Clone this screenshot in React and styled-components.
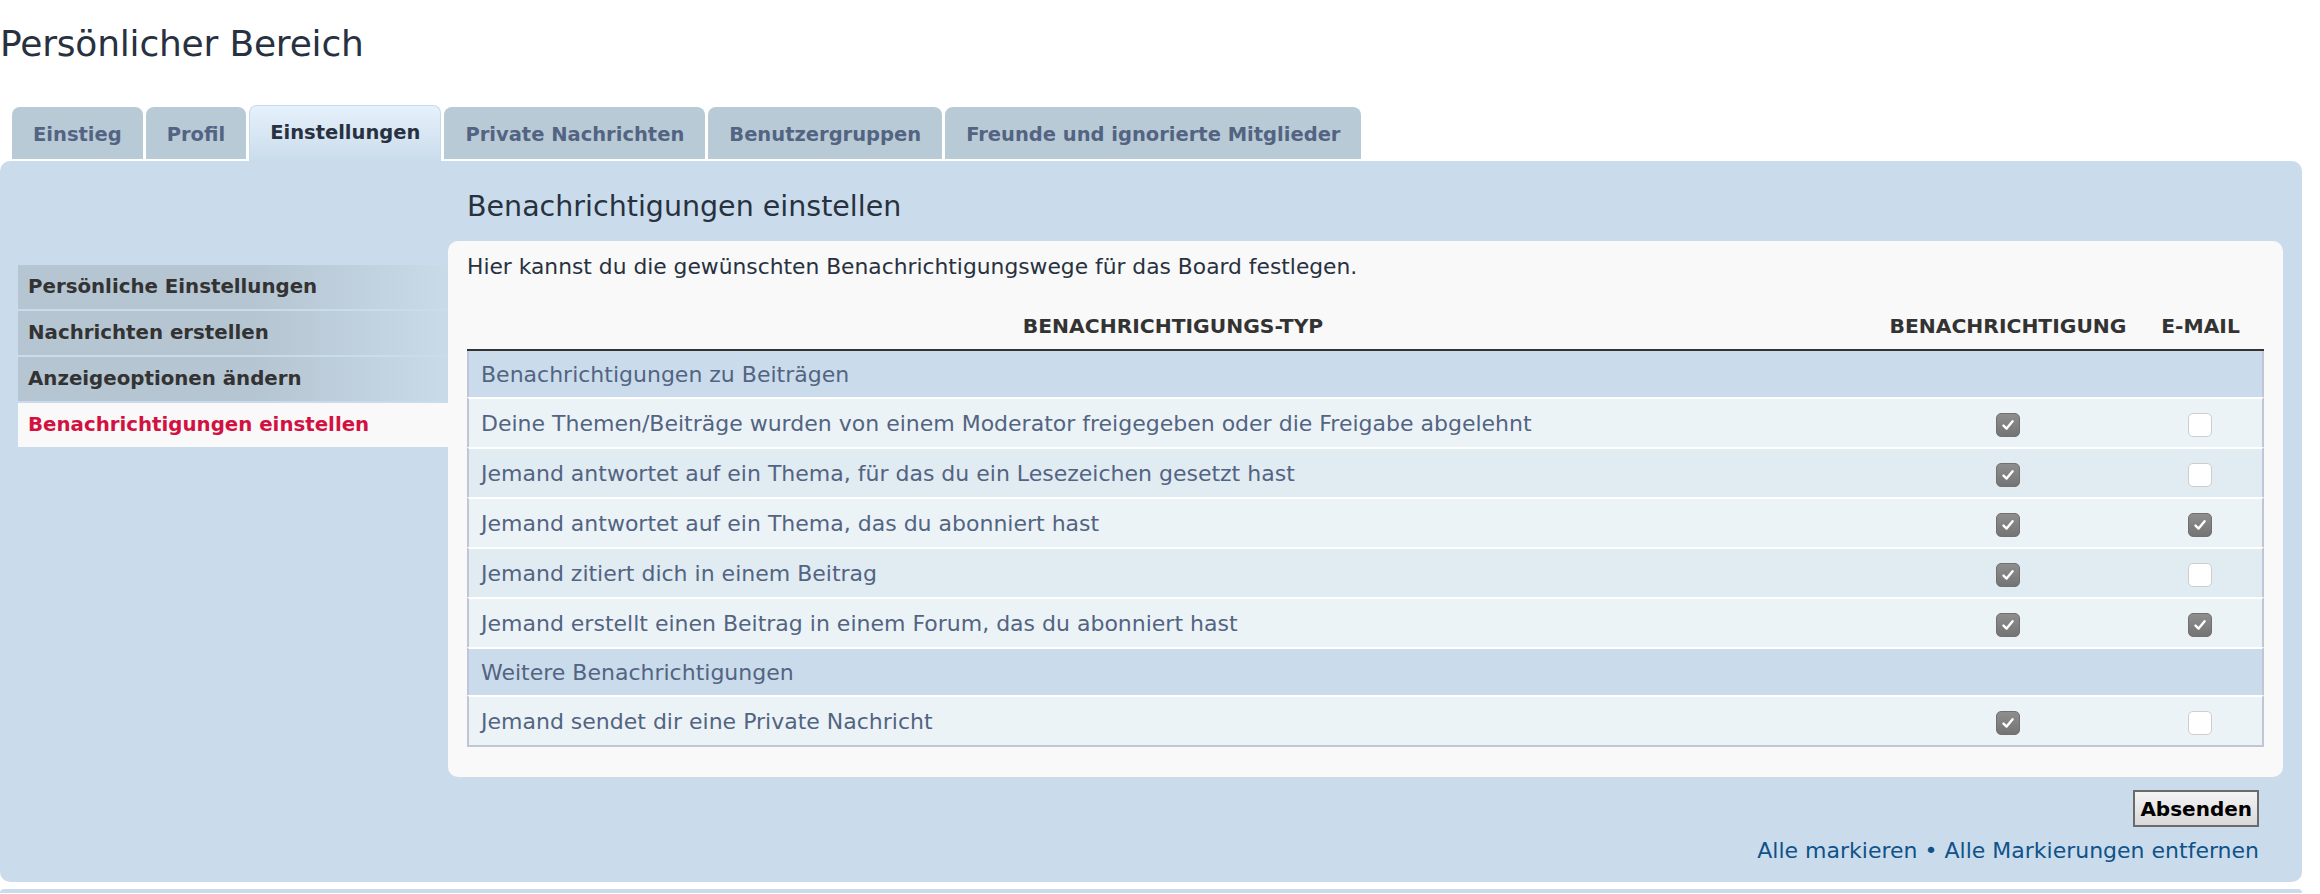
import React from "react"
import styled, { createGlobalStyle } from "styled-components"

const GlobalStyle = createGlobalStyle`
  html, body {
    margin: 0;
    padding: 0;
    background: #ffffff;
    overflow: hidden;
  }
  body {
    font-family: "DejaVu Sans", Verdana, sans-serif;
    color: #28313f;
  }
`

const tabs = [
  { label: "Einstieg" },
  { label: "Profil" },
  { label: "Einstellungen", active: true },
  { label: "Private Nachrichten" },
  { label: "Benutzergruppen" },
  { label: "Freunde und ignorierte Mitglieder" },
]

const menu = [
  { label: "Persönliche Einstellungen" },
  { label: "Nachrichten erstellen" },
  { label: "Anzeigeoptionen ändern" },
  { label: "Benachrichtigungen einstellen", active: true },
]

const groups = [
  {
    title: "Benachrichtigungen zu Beiträgen",
    rows: [
      { text: "Deine Themen/Beiträge wurden von einem Moderator freigegeben oder die Freigabe abgelehnt", notify: true, mail: false, tone: 1 },
      { text: "Jemand antwortet auf ein Thema, für das du ein Lesezeichen gesetzt hast", notify: true, mail: false, tone: 2 },
      { text: "Jemand antwortet auf ein Thema, das du abonniert hast", notify: true, mail: true, tone: 1 },
      { text: "Jemand zitiert dich in einem Beitrag", notify: true, mail: false, tone: 2 },
      { text: "Jemand erstellt einen Beitrag in einem Forum, das du abonniert hast", notify: true, mail: true, tone: 1 },
    ],
  },
  {
    title: "Weitere Benachrichtigungen",
    rows: [
      { text: "Jemand sendet dir eine Private Nachricht", notify: true, mail: false, tone: 1 },
    ],
  },
]

const Checkbox = ({ checked }) => (
  <Box $checked={checked}>
    {checked && (
      <svg width="16" height="16" viewBox="0 0 16 16">
        <path d="M3.5 8.6 L6.6 11.6 L12.6 4.2" fill="none" stroke="#ffffff" strokeWidth="2.4" strokeLinecap="round" strokeLinejoin="round" />
      </svg>
    )}
  </Box>
)

const App = () => {
  return (
    <Page>
      <GlobalStyle />
      <Title>Persönlicher Bereich</Title>
      <Tabs>
        {tabs.map((t) => (
          <Tab key={t.label} $active={t.active}>{t.label}</Tab>
        ))}
      </Tabs>
      <Panel>
        <Sidebar>
          {menu.map((m) => (
            <MenuItem key={m.label} $active={m.active}>{m.label}</MenuItem>
          ))}
        </Sidebar>
        <Main>
          <SubTitle>Benachrichtigungen einstellen</SubTitle>
          <Content>
            <Intro>Hier kannst du die gewünschten Benachrichtigungswege für das Board festlegen.</Intro>
            <Table>
              <colgroup>
                <col />
                <col style={{ width: 258 }} />
                <col style={{ width: 127 }} />
              </colgroup>
              <thead>
                <tr>
                  <Th>Benachrichtigungs-Typ</Th>
                  <Th>Benachrichtigung</Th>
                  <Th>E-Mail</Th>
                </tr>
              </thead>
              <tbody>
                {groups.map((g, gi) => (
                  <React.Fragment key={g.title}>
                    <Row $tone={3} $first={gi === 0}>
                      <Cell colSpan={3} $group>{g.title}</Cell>
                    </Row>
                    {g.rows.map((r, ri) => (
                      <Row key={r.text} $tone={r.tone} $last={gi === groups.length - 1 && ri === g.rows.length - 1}>
                        <Cell>{r.text}</Cell>
                        <Cell $center><Checkbox checked={r.notify} /></Cell>
                        <Cell $center><Checkbox checked={r.mail} /></Cell>
                      </Row>
                    ))}
                  </React.Fragment>
                ))}
              </tbody>
            </Table>
          </Content>
          <Actions>
            <SubmitButton type="button">Absenden</SubmitButton>
            <MarkLinks>
              <a href="#all">Alle markieren</a> • <a href="#none">Alle Markierungen entfernen</a>
            </MarkLinks>
          </Actions>
        </Main>
      </Panel>
      <NextPanel />
    </Page>
  )
}

const Page = styled.div`
  padding: 22px 18px 0 0;
`

const Title = styled.h2`
  margin: 0;
  font-size: 36px;
  line-height: 43px;
  font-weight: normal;
  color: #28313f;
  letter-spacing: -0.2px;
`

const Tabs = styled.ul`
  display: flex;
  align-items: flex-end;
  gap: 3px;
  list-style: none;
  margin: 40px 0 0 12px;
  padding: 0;
`

const Tab = styled.li`
  font-size: 19.5px;
  line-height: 24px;
  font-weight: bold;
  white-space: nowrap;
  border-radius: 8px 8px 0 0;
  color: ${(p) => (p.$active ? "#28313f" : "#536482")};
  background: ${(p) =>
    p.$active ? "linear-gradient(to bottom, #e6f1fb 0%, #cadceb 100%)" : "#b9cad7"};
  border: ${(p) => (p.$active ? "1px solid #c4dbef" : "none")};
  border-bottom: none;
  padding: ${(p) => (p.$active ? "15px 20px 16px" : "16px 21px 12px")};
  margin-bottom: ${(p) => (p.$active ? "0" : "2px")};
`

const Panel = styled.div`
  display: grid;
  grid-template-columns: 430px 1fr;
  align-items: start;
  background: #cadceb;
  border-radius: 10px;
  padding: 0 19px 18px 18px;
`

const Sidebar = styled.ul`
  list-style: none;
  margin: 104px 0 0;
  padding: 0;
`

const MenuItem = styled.li`
  height: 44px;
  line-height: 44px;
  margin-bottom: 2px;
  padding-left: 10px;
  font-size: 19.8px;
  font-weight: bold;
  white-space: nowrap;
  color: ${(p) => (p.$active ? "#d31141" : "#333333")};
  background: ${(p) =>
    p.$active ? "#f9f9f9" : "linear-gradient(to right, #b5c5d2 55%, #c9dae8 100%)"};
`

const Main = styled.div`
  display: flex;
  flex-direction: column;
`

const SubTitle = styled.h3`
  margin: 28px 0 0;
  padding-left: 19px;
  font-size: 28.5px;
  line-height: 36px;
  font-weight: normal;
  color: #28313f;
`

const Content = styled.div`
  margin-top: 16px;
  background: #f9f9f9;
  border-radius: 10px;
  padding: 11px 19px 30px;
`

const Intro = styled.p`
  margin: 0;
  font-size: 21.8px;
  line-height: 30px;
  color: #28313f;
`

const Table = styled.table`
  width: 100%;
  margin-top: 22px;
  border-spacing: 0;
  table-layout: fixed;
`

const Th = styled.th`
  padding: 10px 0 11px;
  font-size: 20.3px;
  line-height: 24px;
  font-weight: bold;
  text-transform: uppercase;
  text-align: center;
  color: #333333;
  border-bottom: 2px solid #333333;
`

const toneColors = { 1: "#ecf3f7", 2: "#e1ebf2", 3: "#cadceb" }

const Row = styled.tr`
  background: ${(p) => toneColors[p.$tone]};
  td {
    border-top: ${(p) => (p.$first ? "none" : "2px solid #ffffff")};
    border-bottom: ${(p) => (p.$last ? "2px solid #c0c6d6" : "none")};
  }
  td:first-child {
    border-left: 2px solid #c0c6d6;
  }
  td:last-child {
    border-right: 2px solid #c0c6d6;
  }
`

const Cell = styled.td`
  font-size: 22px;
  line-height: 26px;
  color: #536482;
  white-space: nowrap;
  padding: ${(p) => (p.$group ? "11px 12px 9px" : "12px 12px 10px")};
  text-align: ${(p) => (p.$center ? "center" : "left")};
  vertical-align: middle;
`

const Box = styled.span`
  display: inline-flex;
  align-items: center;
  justify-content: center;
  width: 24px;
  height: 24px;
  box-sizing: border-box;
  border-radius: 5px;
  vertical-align: middle;
  border: 1px solid ${(p) => (p.$checked ? "#707070" : "#cdcdcd")};
  background: ${(p) =>
    p.$checked ? "linear-gradient(to bottom, #8e8e8e, #747474)" : "#ffffff"};
`

const Actions = styled.div`
  display: flex;
  flex-direction: column;
  align-items: flex-end;
  padding-right: 24px;
`

const SubmitButton = styled.button`
  margin-top: 13px;
  height: 37px;
  padding: 0 5px;
  font-family: "DejaVu Sans", Verdana, sans-serif;
  font-size: 20px;
  font-weight: bold;
  color: #000000;
  border: 2px solid #6b6b6b;
  border-radius: 0;
  background: linear-gradient(to bottom, #f4f4f4, #d9d9d9);
`

const MarkLinks = styled.div`
  margin-top: 11px;
  font-size: 22px;
  line-height: 26px;
  color: #105289;
  a {
    color: #105289;
    text-decoration: none;
  }
`

const NextPanel = styled.div`
  margin-top: 7px;
  height: 4px;
  background: #cadceb;
  border-radius: 10px 10px 0 0;
`

export default App
